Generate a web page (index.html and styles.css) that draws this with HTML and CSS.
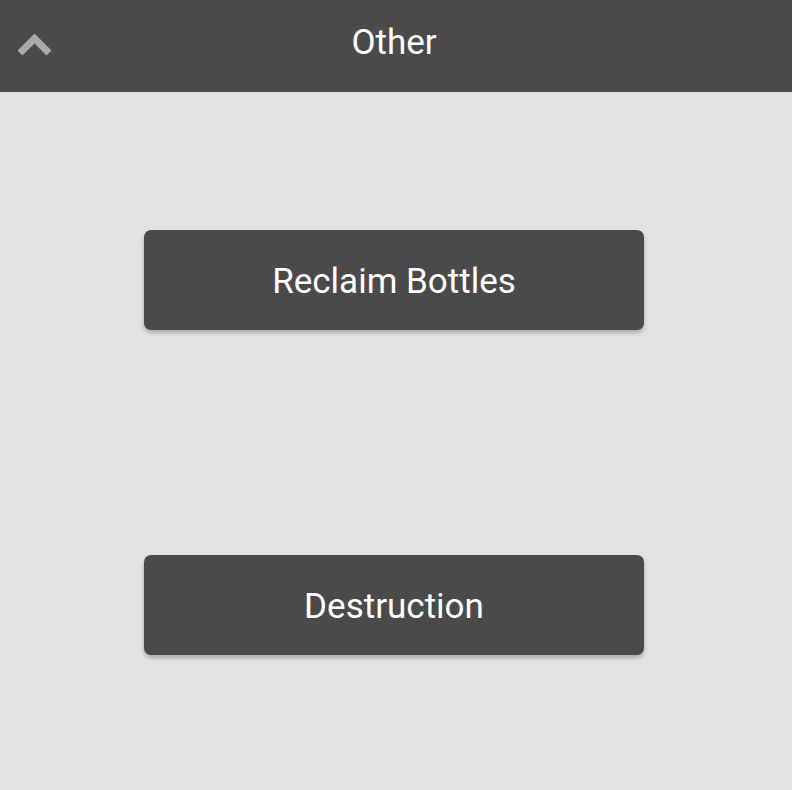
FILE: index.html
```html
<!DOCTYPE html>
<html>
<head>
<meta charset="utf-8">
<link rel="stylesheet" href="styles.css">
</head>
<body>
<header class="topbar">
  <button class="back" aria-label="Up">
    <svg width="34" height="24" viewBox="0 0 34 24"><path d="M2 20 L16.5 5.5 L31 20" fill="none" stroke="#aaaaaa" stroke-width="7" stroke-linejoin="miter"/></svg>
  </button>
  <h1 class="title">Other</h1>
</header>
<main class="content">
  <button class="action">Reclaim Bottles</button>
  <button class="action">Destruction</button>
</main>
</body>
</html>
```
FILE: styles.css
```css
html, body { margin: 0; padding: 0; }
body {
  background: #e3e3e3;
  font-family: Roboto, "Liberation Sans", sans-serif;
  height: 790px;
}
.topbar {
  height: 92px;
  background: #4a4a4a;
  position: relative;
  display: flex;
  align-items: center;
  justify-content: center;
  padding-right: 4px;
  padding-bottom: 8px;
  box-sizing: border-box;
}
.back {
  position: absolute;
  left: 18px;
  top: 33px;
  padding: 0;
  border: 0;
  background: none;
  display: block;
}
.back svg { display: block; }
.title {
  margin: 0;
  color: #ffffff;
  font-weight: 400;
  font-size: 35px;
}
.content {
  display: flex;
  flex-direction: column;
  align-items: center;
  padding-top: 138px;
  padding-right: 4px;
  gap: 225px;
}
.action {
  width: 500px;
  height: 100px;
  border: 0;
  border-radius: 7px;
  background: #4a4a4a;
  color: #ffffff;
  font-family: Roboto, "Liberation Sans", sans-serif;
  font-size: 35px;
  padding: 2px 0 0;
  box-shadow: 0 3px 4px rgba(0,0,0,0.25);
}
```
